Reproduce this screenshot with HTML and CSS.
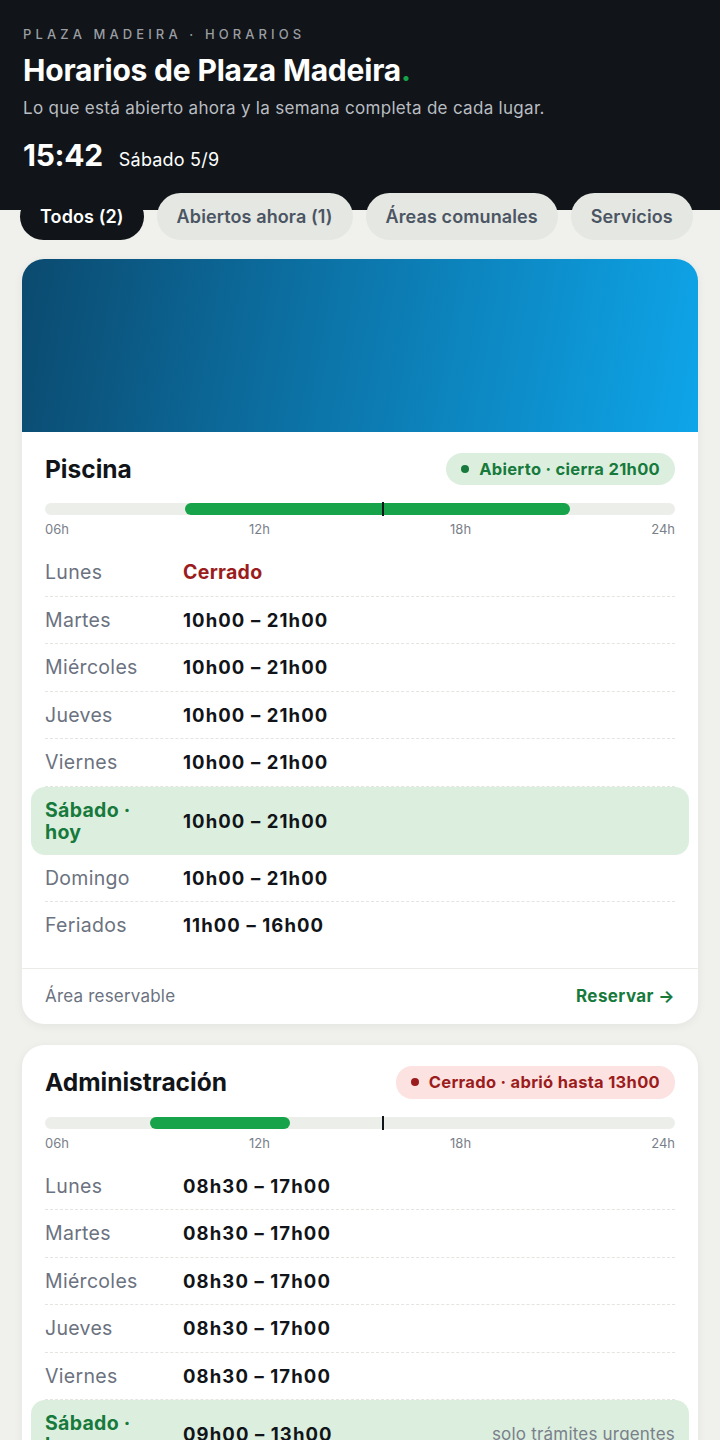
FILE: index.html
```html
<!DOCTYPE html>
<html lang="es">

<head>
    <meta charset="UTF-8" />
    <title>Horarios de Plaza Madeira</title>
    <link rel="stylesheet" href="styles.css">
</head>

<body>
    <header class="top">
        <div class="eyebrow">PLAZA MADEIRA · HORARIOS</div>
        <h1>Horarios de Plaza Madeira<span class="dot">.</span></h1>
        <p class="lead">Lo que está abierto ahora y la semana completa de cada lugar.</p>
        <div class="now">
            <span class="clock">15:42</span>
            <span class="today">Sábado 5/9</span>
        </div>
    </header>

    <nav class="tabs">
        <button class="tab active">Todos (2)</button>
        <button class="tab">Abiertos ahora (1)</button>
        <button class="tab">Áreas comunales</button>
        <button class="tab">Servicios</button>
    </nav>

    <main class="list">
        <!-- PISCINA -->
        <section class="card">
            <div class="cover"></div>
            <div class="card-body">
                <div class="card-head">
                    <h2>Piscina</h2>
                    <span class="badge open"><i></i>Abierto · cierra 21h00</span>
                </div>
                <div class="bar">
                    <div class="fill" style="left: 22.22%; width: 61.11%;"></div>
                    <div class="mark" style="left: 53.7%;"></div>
                </div>
                <div class="ticks"><span>06h</span><span>12h</span><span>18h</span><span>24h</span></div>

                <ul class="week">
                    <li><span class="day">Lunes</span><span class="closed">Cerrado</span></li>
                    <li><span class="day">Martes</span><span class="hours">10h00 – 21h00</span></li>
                    <li><span class="day">Miércoles</span><span class="hours">10h00 – 21h00</span></li>
                    <li><span class="day">Jueves</span><span class="hours">10h00 – 21h00</span></li>
                    <li><span class="day">Viernes</span><span class="hours">10h00 – 21h00</span></li>
                    <li class="is-today"><span class="day">Sábado · hoy</span><span class="hours">10h00 – 21h00</span></li>
                    <li><span class="day">Domingo</span><span class="hours">10h00 – 21h00</span></li>
                    <li><span class="day">Feriados</span><span class="hours">11h00 – 16h00</span></li>
                </ul>
            </div>
            <div class="card-foot">
                <span>Área reservable</span>
                <a href="#" class="cta">Reservar →</a>
            </div>
        </section>

        <!-- ADMINISTRACION -->
        <section class="card">
            <div class="card-body">
                <div class="card-head">
                    <h2>Administración</h2>
                    <span class="badge shut"><i></i>Cerrado · abrió hasta 13h00</span>
                </div>
                <div class="bar">
                    <div class="fill" style="left: 16.67%; width: 22.22%;"></div>
                    <div class="mark" style="left: 53.7%;"></div>
                </div>
                <div class="ticks"><span>06h</span><span>12h</span><span>18h</span><span>24h</span></div>

                <ul class="week">
                    <li><span class="day">Lunes</span><span class="hours">08h30 – 17h00</span></li>
                    <li><span class="day">Martes</span><span class="hours">08h30 – 17h00</span></li>
                    <li><span class="day">Miércoles</span><span class="hours">08h30 – 17h00</span></li>
                    <li><span class="day">Jueves</span><span class="hours">08h30 – 17h00</span></li>
                    <li><span class="day">Viernes</span><span class="hours">08h30 – 17h00</span></li>
                    <li class="is-today"><span class="day">Sábado · hoy</span><span class="hours">09h00 – 13h00</span><span class="note">solo trámites urgentes</span></li>
                    <li><span class="day">Domingo</span><span class="closed">Cerrado</span></li>
                </ul>
            </div>
        </section>
    </main>
</body>

</html>
```

FILE: styles.css
```css
* {
    box-sizing: border-box;
}

body {
    margin: 0;
    background-color: #f0f1ed;
    color: #111418;
    font-family: Inter, Roboto, "Liberation Sans", sans-serif;
}

/* HEADER */
.top {
    background-color: #111418;
    padding: 26px 23px 37px;
}

.eyebrow {
    font-size: 13px;
    line-height: 16px;
    letter-spacing: 4.1px;
    color: #9a9ea3;
    font-weight: 500;
}

h1 {
    margin: 11px 0 0;
    font-size: 30px;
    line-height: 34px;
    font-weight: 700;
    color: #ffffff;
    letter-spacing: -0.2px;
}

h1 .dot {
    color: #16a34a;
}

.lead {
    margin: 10px 0 0;
    font-size: 17px;
    line-height: 22px;
    color: #b9bdc2;
    letter-spacing: 0.3px;
}

.now {
    margin-top: 18px;
    display: flex;
    align-items: baseline;
    gap: 16px;
    color: #ffffff;
}

.clock {
    font-size: 30px;
    line-height: 36px;
    font-weight: 700;
    letter-spacing: -0.3px;
}

.today {
    font-size: 18px;
    letter-spacing: 0.2px;
}

/* TABS */
.tabs {
    display: flex;
    gap: 13px;
    padding: 0 20px;
    margin-top: -17px;
}

.tab {
    border: none;
    height: 47px;
    padding: 0 20px;
    border-radius: 24px;
    background-color: #e4e7e2;
    color: #4b5563;
    font-family: Inter, Roboto, sans-serif;
    font-size: 18px;
    font-weight: 600;
    letter-spacing: 0.1px;
    white-space: nowrap;
    cursor: pointer;
}

.tab.active {
    background-color: #111418;
    color: #ffffff;
}

/* CARDS */
.list {
    padding: 19px 22px 0;
    display: flex;
    flex-direction: column;
    gap: 21px;
}

.card {
    background: #ffffff;
    border-radius: 22px;
    overflow: hidden;
    box-shadow: 0 2px 10px rgba(20, 30, 20, 0.06);
}

.cover {
    height: 173px;
    background: linear-gradient(100deg, #0b4a6f 0%, #0c74a8 45%, #0ea5e9 100%);
}

.card-body {
    padding: 21px 23px 0;
}

.card-head {
    display: flex;
    justify-content: space-between;
    align-items: center;
}

h2 {
    margin: 0;
    font-size: 24.5px;
    line-height: 28px;
    font-weight: 700;
    color: #111418;
    letter-spacing: 0;
}

.badge {
    display: inline-flex;
    align-items: center;
    gap: 10px;
    height: 32px;
    padding: 0 15px;
    border-radius: 16px;
    font-size: 16.5px;
    font-weight: 700;
    letter-spacing: 0.3px;
}

.badge i {
    width: 8px;
    height: 8px;
    border-radius: 50%;
    background-color: currentColor;
}

.badge.open {
    background-color: #dcefdf;
    color: #177a3c;
}

.badge.shut {
    background-color: #fde2e2;
    color: #9b1c1c;
    height: 33px;
}

/* TIMELINE */
.bar {
    position: relative;
    margin-top: 18px;
    height: 12px;
    border-radius: 6px;
    background-color: #eceee9;
}

.fill {
    position: absolute;
    top: 0;
    bottom: 0;
    border-radius: 6px;
    background-color: #16a34a;
}

.mark {
    position: absolute;
    top: -1px;
    width: 2px;
    height: 14px;
    margin-left: -1px;
    background-color: #111418;
}

.ticks {
    display: flex;
    justify-content: space-between;
    margin-top: 6px;
    font-size: 13px;
    line-height: 16px;
    color: #7a808a;
}

/* WEEK */
.week {
    list-style: none;
    margin: 12px 0 19px;
    padding: 0;
}

.week li {
    display: flex;
    align-items: center;
    gap: 38px;
    padding: 11.25px 0;
    font-size: 19.5px;
    line-height: 24px;
    letter-spacing: 0.3px;
    border-bottom: 1px dashed #e3e5e1;
}

.week li:last-child {
    border-bottom: none;
}

.day {
    width: 100px;
    flex-shrink: 0;
    color: #6b7280;
}

.hours {
    font-weight: 700;
    font-size: 18.5px;
    color: #111418;
    letter-spacing: 1.1px;
}

.closed {
    font-weight: 700;
    color: #9b1c1c;
}

.note {
    margin-left: auto;
    font-size: 17px;
    letter-spacing: 0.2px;
    color: #7a808a;
}

.week li.is-today {
    margin: 0 -14px;
    padding: 12px 14px;
    border-radius: 14px;
    background-color: #dcefdf;
    border-bottom: none;
    line-height: 22px;
}

.is-today .day {
    color: #177a3c;
    font-weight: 700;
}

/* FOOTER */
.card-foot {
    display: flex;
    justify-content: space-between;
    align-items: center;
    padding: 16px 23px 17px;
    border-top: 1px solid #ebece8;
    font-size: 17px;
    line-height: 22px;
    color: #6b7280;
    letter-spacing: 0.2px;
}

.cta {
    color: #177a3c;
    font-weight: 700;
    text-decoration: none;
    letter-spacing: 0.4px;
}
```
